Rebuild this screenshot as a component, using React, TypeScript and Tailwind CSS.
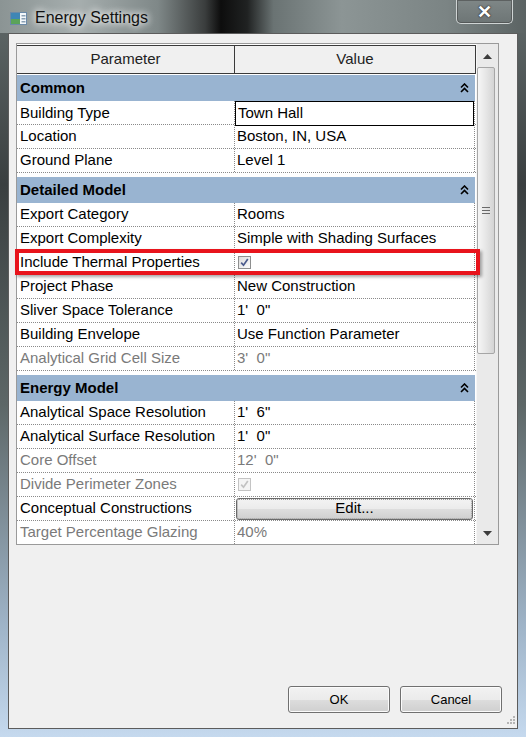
import React from 'react';

type Row = {
  label: string;
  value?: string;
  kind?: 'text' | 'check' | 'button' | 'edit';
  disabled?: boolean;
};

const groups: { title: string; gap: string; rows: Row[] }[] = [
  {
    title: 'Common',
    gap: 'pt-[1px]',
    rows: [
      { label: 'Building Type', value: 'Town Hall', kind: 'edit' },
      { label: 'Location', value: 'Boston, IN, USA' },
      { label: 'Ground Plane', value: 'Level 1' },
    ],
  },
  {
    title: 'Detailed Model',
    gap: 'pt-[4px]',
    rows: [
      { label: 'Export Category', value: 'Rooms' },
      { label: 'Export Complexity', value: 'Simple with Shading Surfaces' },
      { label: 'Include Thermal Properties', kind: 'check' },
      { label: 'Project Phase', value: 'New Construction' },
      { label: 'Sliver Space Tolerance', value: "1'  0\"" },
      { label: 'Building Envelope', value: 'Use Function Parameter' },
      { label: 'Analytical Grid Cell Size', value: "3'  0\"", disabled: true },
    ],
  },
  {
    title: 'Energy Model',
    gap: 'pt-[4px]',
    rows: [
      { label: 'Analytical Space Resolution', value: "1'  6\"" },
      { label: 'Analytical Surface Resolution', value: "1'  0\"" },
      { label: 'Core Offset', value: "12'  0\"", disabled: true },
      { label: 'Divide Perimeter Zones', kind: 'check', disabled: true },
      { label: 'Conceptual Constructions', kind: 'button', value: 'Edit...' },
      { label: 'Target Percentage Glazing', value: '40%', disabled: true },
    ],
  },
];

const Collapse = () => (
  <svg width="9" height="10" viewBox="0 0 9 10" className="mr-[6px]">
    <polyline points="1,4.5 4.5,1 8,4.5" fill="none" stroke="#000" strokeWidth="1.6" />
    <polyline points="1,9 4.5,5.5 8,9" fill="none" stroke="#000" strokeWidth="1.6" />
  </svg>
);

const CheckBox = ({ disabled }: { disabled?: boolean }) => (
  <div
    className={`w-[13px] h-[13px] ml-[3px] border flex items-center justify-center ${
      disabled ? 'border-[#c4c4c4] bg-[#f4f4f4]' : 'border-[#8e8f8f] bg-[linear-gradient(135deg,#dcdcdc,#fbfbfb)]'
    }`}
  >
    <svg width="9" height="9" viewBox="0 0 9 9">
      <polyline
        points="1.2,4.6 3.5,7.2 7.8,1"
        fill="none"
        stroke={disabled ? '#c2c2c2' : '#4a5a8c'}
        strokeWidth="1.7"
      />
    </svg>
  </div>
);

const ValueCell = ({ row }: { row: Row }) => {
  if (row.kind === 'check') return <CheckBox disabled={row.disabled} />;
  if (row.kind === 'edit')
    return (
      <div className="h-full w-full border border-black flex items-center pl-[2px] bg-white">{row.value}</div>
    );
  if (row.kind === 'button')
    return (
      <div className="h-[22px] w-[237px] ml-[1px] rounded-[3px] border border-[#6a6a6a] outline outline-1 outline-dotted outline-[#9a9a9a] -outline-offset-2 bg-[linear-gradient(#f3f3f3_0%,#ebebeb_50%,#dddddd_51%,#cfcfcf_100%)] flex items-center justify-center text-black">
        {row.value}
      </div>
    );
  return <span className="pl-[2px] whitespace-pre">{row.value}</span>;
};

const ScrollBar = () => (
  <div className="w-[22px] h-full bg-[#eaeaea] border-l border-[#f6f6f6] flex flex-col items-center">
    <svg width="9" height="5" viewBox="0 0 9 5" className="mt-[10px] mb-[8px]">
      <polygon points="0,5 4.5,0 9,5" fill="#3c3c3c" />
    </svg>
    <div className="w-[18px] h-[287px] ml-[-3px] rounded-[2px] border border-[#a6a6a6] bg-[linear-gradient(90deg,#f6f6f6,#e6e6e6_50%,#d4d4d4)] flex items-center justify-center">
      <div className="flex flex-col gap-[2px]">
        <div className="w-[8px] h-[1px] bg-[#6a6a6a]" />
        <div className="w-[8px] h-[1px] bg-[#6a6a6a]" />
        <div className="w-[8px] h-[1px] bg-[#6a6a6a]" />
      </div>
    </div>
    <div className="flex-1" />
    <svg width="9" height="5" viewBox="0 0 9 5" className="mb-[8px]">
      <polygon points="0,0 9,0 4.5,5" fill="#3c3c3c" />
    </svg>
  </div>
);

const WinIcon = () => (
  <svg width="17" height="13" viewBox="0 0 17 13">
    <rect x="0.5" y="0.5" width="16" height="12" fill="#f4f8fb" stroke="#6b8aa8" />
    <rect x="1" y="1" width="9" height="11" fill="#3f86b5" />
    <rect x="1" y="7" width="9" height="5" fill="#5ba35a" />
    <rect x="11.5" y="3" width="4" height="1.5" fill="#8aa0b4" />
    <rect x="11.5" y="6" width="4" height="1.5" fill="#8aa0b4" />
    <rect x="11.5" y="9" width="4" height="1.5" fill="#8aa0b4" />
  </svg>
);

export default function App() {
  return (
    <div className="relative w-[526px] h-[737px] overflow-hidden font-['Liberation_Sans',Arial,sans-serif] bg-[linear-gradient(180deg,#626b6b_0%,#3a3f40_25%,#5d6767_55%,#9fb4c8_85%,#c5d9ee_100%)] flex flex-col">
      {/* title bar */}
      <div className="h-[33px] shrink-0 flex items-start bg-[linear-gradient(90deg,#8b9494_0%,#a6aeae_15%,#7f8888_30%,#3a3d3d_39%,#0d0d0d_42%,#202222_47%,#6a7373_52%,#8c9595_65%,#7b8484_85%,#5b6363_100%)]">
        <div className="flex items-center gap-[8px] pl-[10px] pt-[3px] h-[33px]">
          <WinIcon />
          <span className="text-[16px] text-[#111] [text-shadow:0_0_7px_#fff,0_0_10px_#fff]">Energy Settings</span>
        </div>
        <div className="flex-1" />
        <div className="w-[57px] h-[24px] mr-[13px] rounded-b-[5px] border border-t-0 border-[#cfd4d4] bg-[linear-gradient(#7f8787,#6d7575)] flex items-center justify-center shadow-[inset_0_0_0_1px_rgba(60,60,60,0.5)]">
          <span className="text-white font-bold text-[18px] leading-none [text-shadow:0_0_2px_#222,0_0_1px_#222]">✕</span>
        </div>
      </div>

      {/* client */}
      <div className="mx-[8px] h-[696px] border border-[#5c5c5c] bg-[#f0f0f0] flex flex-col pl-[7px] pt-[9px] pr-[15px] pb-[15px]">
        <div className="w-[483px] h-[502px] border border-[#9a9a9a] bg-white flex text-[15px] text-black">
          <div className="w-[459px] h-full overflow-hidden">
            {/* header */}
            <div className="mt-[1px] h-[29px] w-[459px] grid grid-cols-[218px_241px] bg-[#f0f0f0] border-t border-b border-[#3a3a3a]">
              <div className="flex items-center justify-center border-r border-[#3a3a3a] text-[#222]">Parameter</div>
              <div className="flex items-center justify-center border-r border-[#3a3a3a] text-[#222]">Value</div>
            </div>
            {groups.map((g) => (
              <div key={g.title}>
                <div className={g.gap}>
                  <div className="h-[26px] w-[458px] bg-[#99b4d1] flex items-center justify-between pl-[3px]">
                    <span className="font-bold">{g.title}</span>
                    <Collapse />
                  </div>
                </div>
                {g.rows.map((r) => (
                  <div
                    key={r.label}
                    className={`h-[24px] grid grid-cols-[218px_240px] border-b border-dotted border-[#8a8a8a] ${
                      r.disabled ? 'text-[#7a7a7a]' : 'text-black'
                    }`}
                  >
                    <div className="flex items-center pl-[3px] border-r border-dotted border-[#8a8a8a] whitespace-nowrap">
                      {r.label}
                    </div>
                    <div className="flex items-center border-r border-dotted border-[#8a8a8a] whitespace-nowrap">
                      <ValueCell row={r} />
                    </div>
                  </div>
                ))}
              </div>
            ))}
          </div>
          <ScrollBar />
        </div>

        <div className="flex-1" />

        <div className="flex justify-end gap-[10px] text-[13px]">
          {['OK', 'Cancel'].map((b) => (
            <div
              key={b}
              className="w-[102px] h-[27px] rounded-[3px] border border-[#707070] bg-[linear-gradient(#f2f2f2_0%,#ebebeb_50%,#dddddd_51%,#cfcfcf_100%)] shadow-[inset_0_0_0_1px_#fbfbfb] flex items-center justify-center text-black"
            >
              {b}
            </div>
          ))}
        </div>
      </div>

      {/* resize grip */}
      <svg width="10" height="10" viewBox="0 0 10 10" className="absolute left-[505px] top-[714px]">
        {[
          [8, 2],
          [5, 5],
          [8, 5],
          [2, 8],
          [5, 8],
          [8, 8],
        ].map(([x, y]) => (
          <rect key={`${x}-${y}`} x={x} y={y} width="2" height="2" fill="#b5b5b5" />
        ))}
      </svg>

      {/* highlight annotation */}
      <div className="absolute left-[15px] top-[249px] w-[465px] h-[26px] border-4 border-[#e8141c] shadow-[2px_2px_3px_rgba(0,0,0,0.35)]" />
    </div>
  );
}
